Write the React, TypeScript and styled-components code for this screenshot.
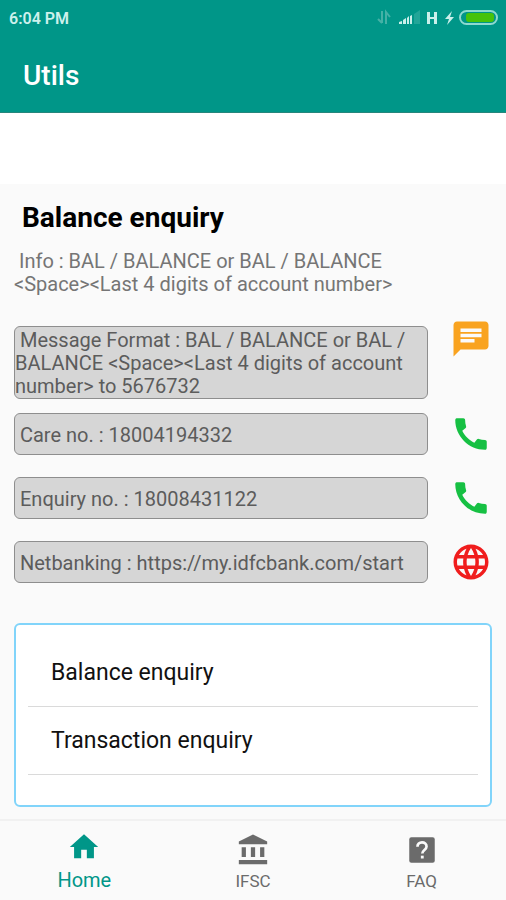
import React from "react";
import styled, { createGlobalStyle } from "styled-components";
import {
  MdAccountBalance,
  MdCall,
  MdChat,
  MdHome,
  MdLanguage,
} from "react-icons/md";

const GlobalStyle = createGlobalStyle`
  *, *::before, *::after { box-sizing: border-box; }
  body {
    margin: 0;
    background: #fafafa;
    font-family: Roboto, "Liberation Sans", sans-serif;
  }
  h1, h2, p, ul { margin: 0; padding: 0; }
`;

const Page = styled.div`
  display: flex;
  flex-direction: column;
  min-height: 100vh;
`;

const Header = styled.header`
  background: #009688;
  color: #ffffff;
  border-bottom: 1px solid #26867c;
`;

const StatusBar = styled.div`
  display: flex;
  align-items: center;
  justify-content: space-between;
  height: 36px;
  padding: 0 7px 0 9px;
  color: #cdf1ec;
  font-size: 16px;
  font-weight: 600;
`;

const AppBar = styled.div`
  display: flex;
  align-items: center;
  height: 76px;
  padding: 4px 23px 0;
`;

const AppTitle = styled.h1`
  font-size: 28px;
  line-height: 32px;
  font-weight: 500;
`;

const AdSpace = styled.div`
  height: 71px;
  background: #ffffff;
`;

const Main = styled.main`
  padding: 16px 14px 12px;
`;

const Heading = styled.h2`
  padding: 0 8px;
  font-size: 28px;
  line-height: 36px;
  font-weight: 700;
  color: #000000;
`;

const Info = styled.p`
  margin-top: 14px;
  font-size: 20px;
  line-height: 23px;
  white-space: pre-wrap;
  color: #757575;
`;

const Unbroken = styled.span`
  white-space: nowrap;
`;

const Contacts = styled.ul`
  display: flex;
  flex-direction: column;
  gap: 22px;
  margin-top: 14px;
  list-style: none;
`;

const ContactRow = styled.li<{ $top?: boolean }>`
  display: flex;
  align-items: ${(p) => (p.$top ? "flex-start" : "center")};
  gap: 22px;
  margin-bottom: ${(p) => (p.$top ? "-8px" : "0")};
`;

const Field = styled.p<{ $top?: boolean }>`
  flex: 1;
  min-width: 0;
  margin-top: ${(p) => (p.$top ? "16px" : "0")};
  padding: ${(p) => (p.$top ? "2px 0 0" : "10px 0 7px")};
  border: 1px solid #8e8e8e;
  border-radius: 6px;
  background: #d6d6d6;
  color: #5c5c5c;
  font-size: 20px;
  line-height: 23px;
  white-space: pre-wrap;
`;

const ActionButton = styled.button<{ $color: string; $top?: boolean }>`
  display: flex;
  margin-top: ${(p) => (p.$top ? "8px" : "0")};
  padding: 0;
  border: 0;
  background: none;
  color: ${(p) => p.$color};
  cursor: pointer;
`;

const ActionLink = styled.a`
  display: flex;
  color: #f01d1d;
`;

const Card = styled.ul`
  margin-top: 40px;
  padding: 14px 12px 30px;
  border: 2px solid #81d4fa;
  border-radius: 6px;
  background: #ffffff;
  list-style: none;
`;

const CardButton = styled.button`
  display: block;
  width: 100%;
  padding: 20px 23px;
  border: 0;
  border-bottom: 1px solid #dadada;
  background: none;
  color: #111111;
  font-family: inherit;
  font-size: 23px;
  line-height: 27px;
  text-align: left;
  cursor: pointer;
`;

const BottomNav = styled.nav`
  position: sticky;
  bottom: 0;
  display: grid;
  grid-template-columns: repeat(3, 1fr);
  margin-top: auto;
  border-top: 2px solid #f1f1f1;
  background: #fafafa;
`;

const Tab = styled.button<{ $active?: boolean }>`
  display: flex;
  flex-direction: column;
  align-items: center;
  justify-content: space-between;
  height: 79px;
  padding: ${(p) => (p.$active ? "9px 0" : "12px 0 8px")};
  border: 0;
  background: none;
  color: ${(p) => (p.$active ? "#009688" : "#6b6b6b")};
  font-family: inherit;
  font-size: ${(p) => (p.$active ? "20px" : "17px")};
  line-height: 22px;
  cursor: pointer;
`;

const StatusGlyphs = () => (
  <svg width="122" height="20" viewBox="0 0 122 20" aria-hidden="true">
    <g fill="none" stroke="#45b1a6" strokeWidth="2">
      <path d="M5 3v12M1 11l4 4" />
      <path d="M9 16V4l4 5" />
    </g>
    <path d="M37 16V6l6-4v14z" fill="#22a598" />
    <g fill="#c9efea">
      <path d="M22 16v-2l3-1v3zM26 16v-4l3-2v6zM30 16v-6l2-2v8zM33 16V8l2-1v9z" />
      <path d="M50 4h3v5h4V4h3v12h-3v-5h-4v5h-3z" />
      <path d="M75 3l-7 8h4l-2 6 7-8h-4z" />
    </g>
    <rect x="83" y="3" width="37" height="13" rx="6.500" fill="#009688" stroke="#8ed9cf" strokeWidth="2" />
    <rect x="89" y="5" width="28" height="9" rx="3" fill="#46c20b" />
  </svg>
);

const HelpSquare = () => (
  <svg width="34" height="34" viewBox="0 0 24 24" fill="currentColor" aria-hidden="true">
    <rect x="3" y="3" width="18" height="18" rx="1.500" />
    <path
      d="M8.800 9.700c0-1.900 1.400-3.100 3.200-3.100s3.200 1.200 3.200 2.900c0 2.400-3 2.500-3 5"
      fill="none"
      stroke="#fafafa"
      strokeWidth="1.900"
    />
    <rect x="11.200" y="16" width="2" height="2" fill="#fafafa" />
  </svg>
);

export default function App() {
  return (
    <Page>
      <GlobalStyle />
      <Header>
        <StatusBar>
          <span>6:04 PM</span>
          <StatusGlyphs />
        </StatusBar>
        <AppBar>
          <AppTitle>Utils</AppTitle>
        </AppBar>
      </Header>
      <AdSpace />
      <Main>
        <Heading>Balance enquiry</Heading>
        <Info>
          {" Info : BAL / BALANCE or BAL / BALANCE "}
          <Unbroken>{"<Space><Last"}</Unbroken>
          {" 4 digits of account number>"}
        </Info>
        <Contacts>
          <ContactRow $top>
            <Field $top>
              {" Message Format : BAL / BALANCE or BAL / BALANCE <Space><Last 4 digits of account number> to 5676732"}
            </Field>
            <ActionButton $top $color="#f9a31f" aria-label="Send message">
              <MdChat size={42} />
            </ActionButton>
          </ContactRow>
          <ContactRow>
            <Field>{" Care no. : 18004194332"}</Field>
            <ActionButton $color="#16c043" aria-label="Call customer care">
              <MdCall size={42} />
            </ActionButton>
          </ContactRow>
          <ContactRow>
            <Field>{" Enquiry no. : 18008431122"}</Field>
            <ActionButton $color="#16c043" aria-label="Call enquiry">
              <MdCall size={42} />
            </ActionButton>
          </ContactRow>
          <ContactRow>
            <Field>{" Netbanking : https://my.idfcbank.com/start"}</Field>
            <ActionLink href="https://my.idfcbank.com/start" aria-label="Open netbanking">
              <MdLanguage size={42} />
            </ActionLink>
          </ContactRow>
        </Contacts>
        <Card>
          <li>
            <CardButton>Balance enquiry</CardButton>
          </li>
          <li>
            <CardButton>Transaction enquiry</CardButton>
          </li>
        </Card>
      </Main>
      <BottomNav>
        <Tab $active>
          <MdHome size={34} />
          Home
        </Tab>
        <Tab>
          <MdAccountBalance size={34} />
          IFSC
        </Tab>
        <Tab>
          <HelpSquare />
          FAQ
        </Tab>
      </BottomNav>
    </Page>
  );
}
